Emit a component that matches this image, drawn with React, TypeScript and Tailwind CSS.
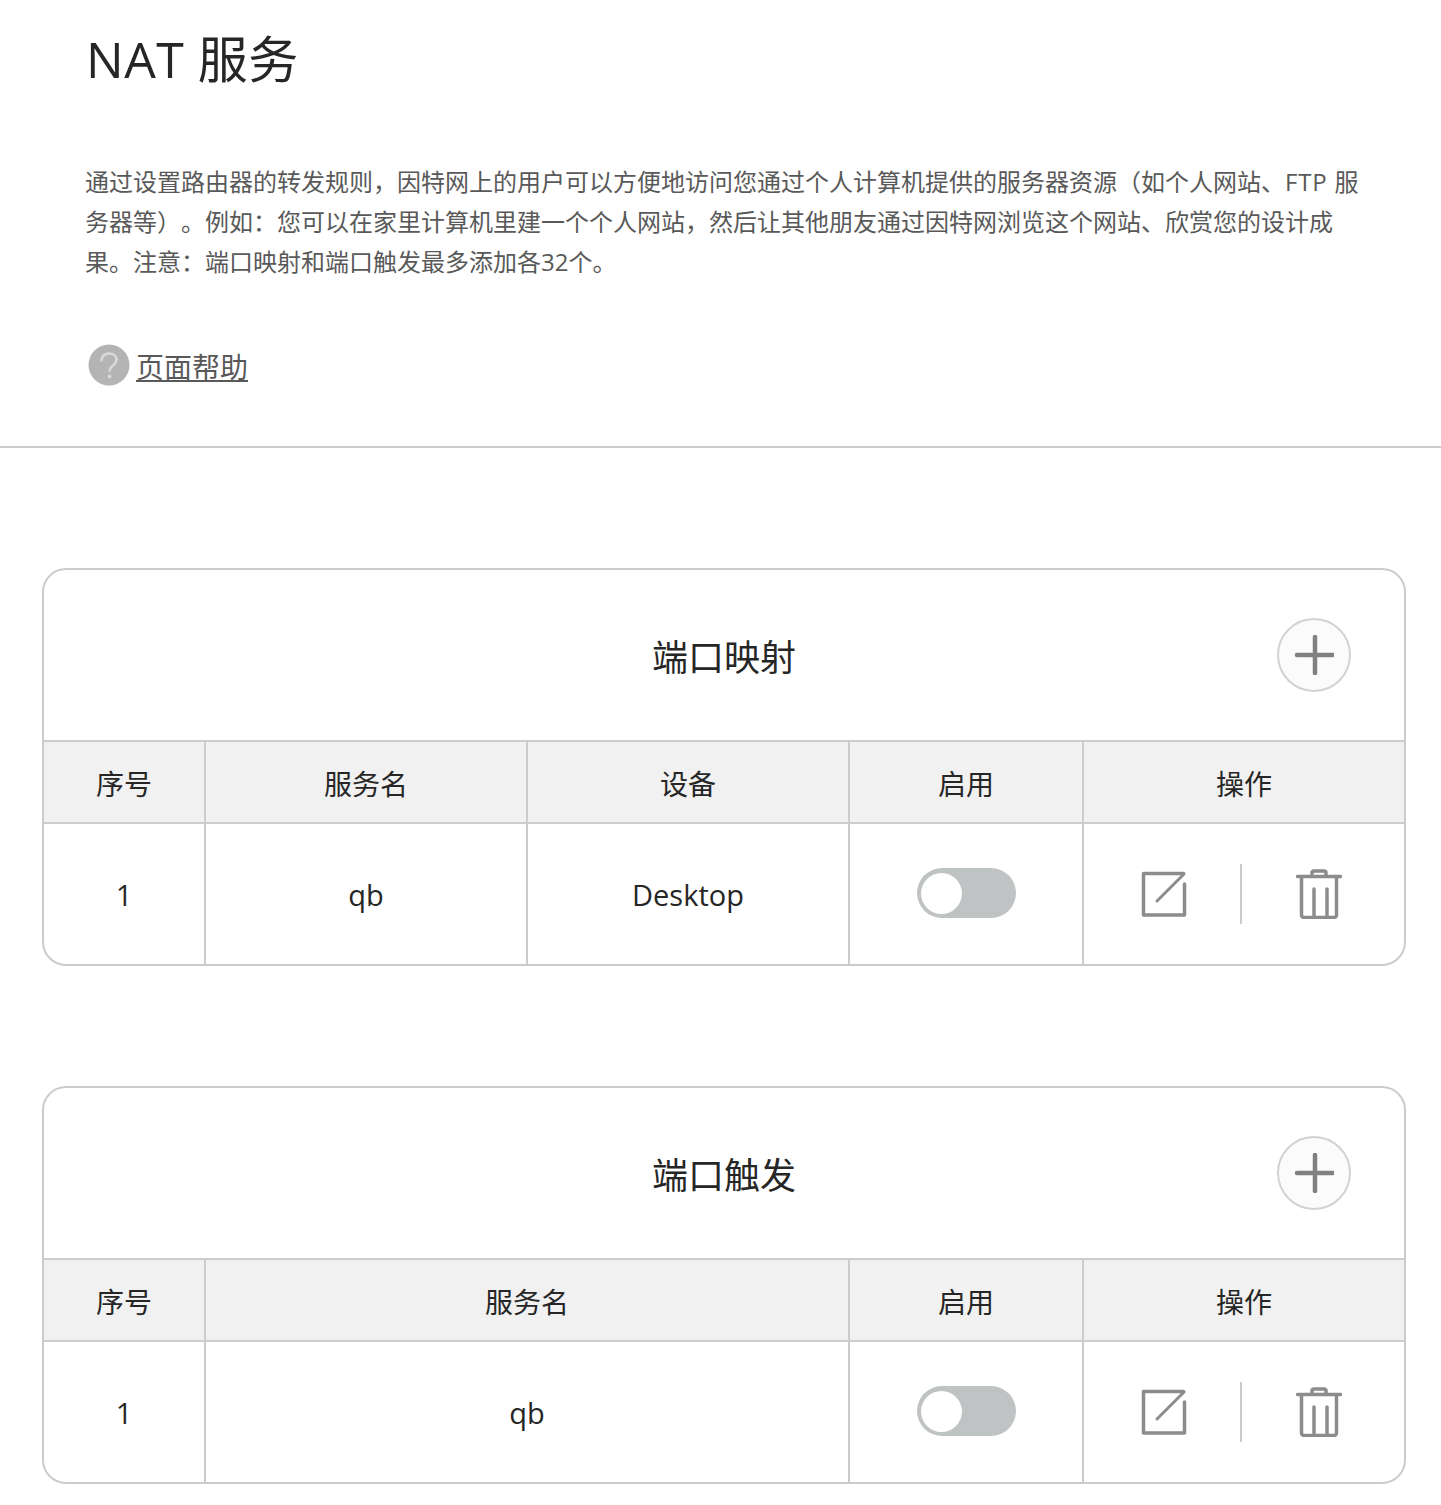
import { Fragment } from "react";

const fontStack = "font-['Open_Sans','Noto_Sans_CJK_SC',sans-serif]";

function HelpIcon() {
  return (
    <svg width="42" height="42" viewBox="0 0 42 42" className="shrink-0">
      <circle cx="21" cy="21" r="20.5" fill="#b4b4b4" />
      <path
        d="M13.5 16.5c0-4.2 3.2-7 7.6-7 4.300 0 7.400 2.600 7.400 6.300 0 2.900-1.700 4.400-3.700 5.900-2 1.500-3.200 2.600-3.200 5"
        fill="none"
        stroke="#d9d9d9"
        strokeWidth="2.600"
        strokeLinecap="round"
      />
      <circle cx="21.600" cy="32.500" r="1.900" fill="#d9d9d9" />
    </svg>
  );
}

function EditIcon() {
  return (
    <svg width="46" height="46" viewBox="0 0 46 46" fill="none" stroke="#8c8c8c" strokeWidth="3.500" strokeLinecap="round" strokeLinejoin="round">
      <path d="M43.500 13v31h-41V2.500h40" />
      <path d="M43 3 16 30" strokeWidth="3" />
    </svg>
  );
}

function TrashIcon() {
  return (
    <svg width="46" height="50" viewBox="0 0 46 50" fill="none" stroke="#8c8c8c" strokeWidth="3.500" strokeLinecap="round" strokeLinejoin="round">
      <path d="M1.500 7.500h43" />
      <path d="M16 7V4a2 2 0 0 1 2-2h10a2 2 0 0 1 2 2v3" />
      <path d="M5.500 8v38a2.500 2.500 0 0 0 2.500 2.500h30a2.500 2.500 0 0 0 2.500-2.500V8" />
      <path d="M18 20v28M31 20v28" />
    </svg>
  );
}

function PlusButton() {
  return (
    <div className="flex h-[74px] w-[74px] items-center justify-center rounded-full border-2 border-[#d2d2d2] bg-[#fbfbfb]">
      <svg width="40" height="40" viewBox="0 0 40 40" stroke="#808080" strokeWidth="4.500" strokeLinecap="round">
        <path d="M21 2v36M3 20h36" />
      </svg>
    </div>
  );
}

function Toggle() {
  return (
    <div className="mb-0.5 flex h-[50px] w-[99px] items-center rounded-full bg-[#bfc3c4] pl-1">
      <div className="h-[41px] w-[41px] rounded-full bg-white" />
    </div>
  );
}

function Actions() {
  return (
    <div className="flex h-full items-center">
      <div className="flex w-[156px] justify-center pl-1">
        <EditIcon />
      </div>
      <div className="h-[60px] w-0.5 bg-[#cccccc]" />
      <div className="flex flex-1 justify-center pr-2">
        <TrashIcon />
      </div>
    </div>
  );
}

type Column = { title: string; value?: string };

function PortCard({ title, columns, gridClass }: { title: string; columns: Column[]; gridClass: string }) {
  return (
    <section className="overflow-hidden rounded-[24px] border-2 border-[#cccccc]">
      <div className="grid h-[172px] grid-cols-[1fr_auto_1fr] items-center border-b-2 border-[#cccccc] px-[53px]">
        <div />
        <h2 className="pt-1.5 text-[36px] leading-[48px] text-[#262626]">{title}</h2>
        <div className="flex justify-end">
          <PlusButton />
        </div>
      </div>
      <div className={`grid ${gridClass}`}>
        {columns.map((col, i) => (
          <div
            key={col.title}
            className={`flex h-[82px] items-center justify-center border-b-2 border-[#cccccc] bg-[#f1f1f1] pt-1 text-[28px] text-[#262626] ${
              i < columns.length - 1 ? "border-r-2" : ""
            }`}
          >
            {col.title}
          </div>
        ))}
        {columns.map((col, i) => (
          <Fragment key={col.title}>
            <div
              className={`flex h-[140px] items-center justify-center text-[29px] text-[#262626] ${
                i < columns.length - 1 ? "border-r-2 border-[#cccccc]" : ""
              }`}
            >
              {col.title === "启用" ? (
                <Toggle />
              ) : col.title === "操作" ? (
                <div className="h-full w-full">
                  <Actions />
                </div>
              ) : (
                <span className="pt-0.5">{col.value}</span>
              )}
            </div>
          </Fragment>
        ))}
      </div>
    </section>
  );
}

export default function App() {
  return (
    <div className={`${fontStack} h-[1505px] w-[1441px] overflow-hidden bg-white [text-spacing-trim:space-all]`}>
      <header className="h-[448px] border-b-2 border-[#cccccc]">
        <h1 className="pl-[86px] pt-[23px] text-[50px] leading-[72px] tracking-[0.5px] text-[#262626]">NAT 服务</h1>
        <p className="mt-[67px] whitespace-nowrap pl-[85px] text-[24px] leading-[40px] text-[#595959]">
          通过设置路由器的转发规则，因特网上的用户可以方便地访问您通过个人计算机提供的服务器资源（如个人网站、<span className="tracking-[0.8px]">FTP </span>服
          <br />
          务器等）。例如：您可以在家里计算机里建一个个人网站，然后让其他朋友通过因特网浏览这个网站、欣赏您的设计成
          <br />
          果。注意：端口映射和端口触发最多添加各32个。
        </p>
        <div className="mt-[61px] flex items-center gap-[6px] pl-[88px]">
          <HelpIcon />
          <a className="pt-1 text-[28px] leading-[40px] text-[#595959] underline">页面帮助</a>
        </div>
      </header>
      <main className="flex flex-col gap-[120px] pl-[42px] pr-[35px] pt-[120px]">
        <PortCard
          title="端口映射"
          gridClass="grid-cols-[162px_322px_322px_234px_1fr]"
          columns={[
            { title: "序号", value: "1" },
            { title: "服务名", value: "qb" },
            { title: "设备", value: "Desktop" },
            { title: "启用" },
            { title: "操作" },
          ]}
        />
        <PortCard
          title="端口触发"
          gridClass="grid-cols-[162px_644px_234px_1fr]"
          columns={[
            { title: "序号", value: "1" },
            { title: "服务名", value: "qb" },
            { title: "启用" },
            { title: "操作" },
          ]}
        />
      </main>
    </div>
  );
}
